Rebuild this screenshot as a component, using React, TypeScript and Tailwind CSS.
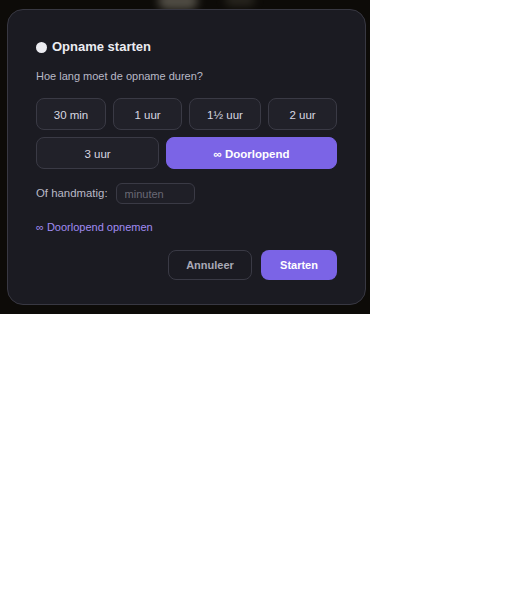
import * as React from 'react'

const presets = ['30 min', '1 uur', '1½ uur', '2 uur']

export default function App() {
  const [selected, setSelected] = React.useState('doorlopend')
  const [minutes, setMinutes] = React.useState('')

  const btn =
    'h-[32px] rounded-[8px] border text-[11.5px] leading-[16px] flex items-center justify-center pt-[2px]'
  const idle = 'border-[#3a3a45] bg-[#212129] text-[#d8d8e1]'
  const active = 'border-[#7b64e6] bg-[#7b64e6] text-white font-bold'

  return (
    <div className="w-full min-h-[589px] bg-white font-['Liberation_Sans',Arial,sans-serif]">
      {/* backdrop */}
      <div className="relative w-[370px] h-[314px] overflow-hidden bg-[#0d0b08] pt-[9px] pl-[7px]">
        <div className="absolute left-[158px] top-[-8px] w-[40px] h-[18px] rounded-full bg-[#6b675c] blur-[4px] opacity-70" />
        <div className="absolute left-[225px] top-[-6px] w-[30px] h-[12px] rounded-full bg-[#3b382f] blur-[4px] opacity-60" />

        <div className="relative w-[359px] h-[296px] rounded-[16px] border border-[#383842] bg-[#1b1b22] px-[28px] pt-[28px]">
          <div className="flex items-center gap-[5px] h-[18px]">
            <span className="w-[11px] h-[11px] rounded-full bg-[#ececf1]" />
            <h2 className="text-[13px] leading-[18px] font-bold text-[#ececf1]">Opname starten</h2>
          </div>

          <p className="mt-[12px] text-[11px] leading-[16px] text-[#b9b9c6]">
            Hoe lang moet de opname duren?
          </p>

          <div className="mt-[14px] flex gap-[7px]">
            {presets.map((p, i) => (
              <button
                key={p}
                onClick={() => setSelected(p)}
                className={`${btn} ${selected === p ? active : idle} ${
                  i === 2 ? 'w-[72px]' : i === 0 ? 'w-[70px]' : 'w-[69px]'
                }`}
              >
                {p}
              </button>
            ))}
          </div>
          <div className="mt-[7px] flex gap-[7px]">
            <button
              onClick={() => setSelected('3 uur')}
              className={`${btn} w-[123px] ${selected === '3 uur' ? active : idle}`}
            >
              3 uur
            </button>
            <button
              onClick={() => setSelected('doorlopend')}
              className={`${btn} flex-1 ${selected === 'doorlopend' ? active : idle}`}
            >
              ∞ Doorlopend
            </button>
          </div>

          <div className="mt-[14px] flex items-center gap-[8px]">
            <label className="text-[11.4px] text-[#b9b9c6]">Of handmatig:</label>
            <input
              value={minutes}
              onChange={(e) => setMinutes(e.target.value)}
              placeholder="minuten"
              className="w-[79px] h-[21px] rounded-[6px] border border-[#3a3a45] bg-[#1f1f27] px-[8px] text-[11px] text-[#d4d4de] placeholder:text-[#696975] outline-none"
            />
          </div>

          <button className="mt-[15px] block text-[11px] leading-[16px] text-[#a18cf2]">
            ∞ Doorlopend opnemen
          </button>

          <div className="mt-[15px] flex justify-end gap-[9px]">
            <button className="w-[84px] h-[30px] rounded-[8px] border border-[#3a3a45] bg-transparent text-[11px] font-semibold text-[#a9a9b6]">
              Annuleer
            </button>
            <button className="w-[76px] h-[30px] rounded-[8px] bg-[#7b64e6] text-[11px] font-bold text-white">
              Starten
            </button>
          </div>
        </div>
      </div>
    </div>
  )
}
